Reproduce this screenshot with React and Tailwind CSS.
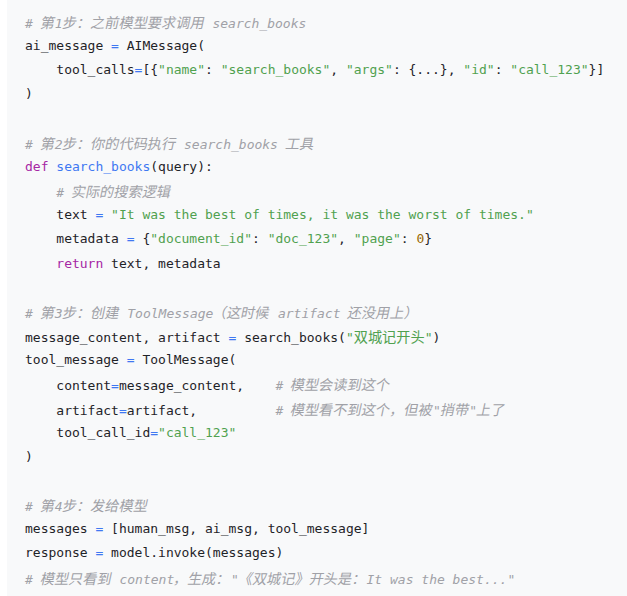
import React from "react";

const CJK = /([\u3000-\u303f\u4e00-\u9fff\uff00-\uffef]+)/;

function Txt({ text, slant }) {
  const parts = text.split(CJK);
  return parts.map((p, i) =>
    i % 2 === 1 ? (
      <span
        key={i}
        className={
          slant
            ? "inline-block -skew-x-12 not-italic text-[14.2px] [font-family:'Noto_Sans_CJK_SC','Noto_Sans_CJK_JP',sans-serif]"
            : "text-[14.2px] [font-family:'Noto_Sans_CJK_SC','Noto_Sans_CJK_JP',sans-serif]"
        }
      >
        {p}
      </span>
    ) : (
      <React.Fragment key={i}>{p}</React.Fragment>
    )
  );
}

const cls = {
  p: "text-[#1f2328]",
  c: "text-[#a0a1a7] italic",
  k: "text-[#a626a4]",
  f: "text-[#4078f2]",
  s: "text-[#50a14f]",
  n: "text-[#986801]",
  o: "text-[#4078f2]",
};

const lines = [
  [["c", "# 第1步：之前模型要求调用 search_books"]],
  [["p", "ai_message "], ["o", "="], ["p", " AIMessage("]],
  [
    ["p", "    tool_calls"], ["o", "="], ["p", "[{"], ["s", '"name"'], ["p", ": "],
    ["s", '"search_books"'], ["p", ", "], ["s", '"args"'], ["p", ": {...}, "],
    ["s", '"id"'], ["p", ": "], ["s", '"call_123"'], ["p", "}]"],
  ],
  [["p", ")"]],
  [],
  [["c", "# 第2步：你的代码执行 search_books 工具"]],
  [["k", "def"], ["p", " "], ["f", "search_books"], ["p", "(query):"]],
  [["p", "    "], ["c", "# 实际的搜索逻辑"]],
  [["p", "    text "], ["o", "="], ["p", " "], ["s", '"It was the best of times, it was the worst of times."']],
  [
    ["p", "    metadata "], ["o", "="], ["p", " {"], ["s", '"document_id"'], ["p", ": "],
    ["s", '"doc_123"'], ["p", ", "], ["s", '"page"'], ["p", ": "], ["n", "0"], ["p", "}"],
  ],
  [["p", "    "], ["k", "return"], ["p", " text, metadata"]],
  [],
  [["c", "# 第3步：创建 ToolMessage（这时候 artifact 还没用上）"]],
  [["p", "message_content, artifact "], ["o", "="], ["p", " search_books("], ["s", '"双城记开头"'], ["p", ")"]],
  [["p", "tool_message "], ["o", "="], ["p", " ToolMessage("]],
  [["p", "    content"], ["o", "="], ["p", "message_content,    "], ["c", "# 模型会读到这个"]],
  [["p", "    artifact"], ["o", "="], ["p", "artifact,          "], ["c", '# 模型看不到这个，但被"捎带"上了']],
  [["p", "    tool_call_id"], ["o", "="], ["s", '"call_123"']],
  [["p", ")"]],
  [],
  [["c", "# 第4步：发给模型"]],
  [["p", "messages "], ["o", "="], ["p", " [human_msg, ai_msg, tool_message]"]],
  [["p", "response "], ["o", "="], ["p", " model.invoke(messages)"]],
  [["c", '# 模型只看到 content，生成："《双城记》开头是：It was the best..."']],
];

export default function App() {
  return (
    <div className="h-[596px] w-[627px] overflow-hidden bg-white pl-[7px]">
      <div className="h-full bg-[#f8f9fa] pl-[18px] pt-[10px]">
        <pre className="m-0 whitespace-pre text-[13px] leading-[24.17px] text-[#1f2328] [font-family:'DejaVu_Sans_Mono','Noto_Sans_CJK_SC',monospace]">
          {lines.map((ln, i) => (
            <div key={i} className="h-[24.17px]">
              {ln.map(([t, s], j) => (
                <span key={j} className={cls[t]}>
                  <Txt text={s} slant={t === "c"} />
                </span>
              ))}
            </div>
          ))}
        </pre>
      </div>
    </div>
  );
}
